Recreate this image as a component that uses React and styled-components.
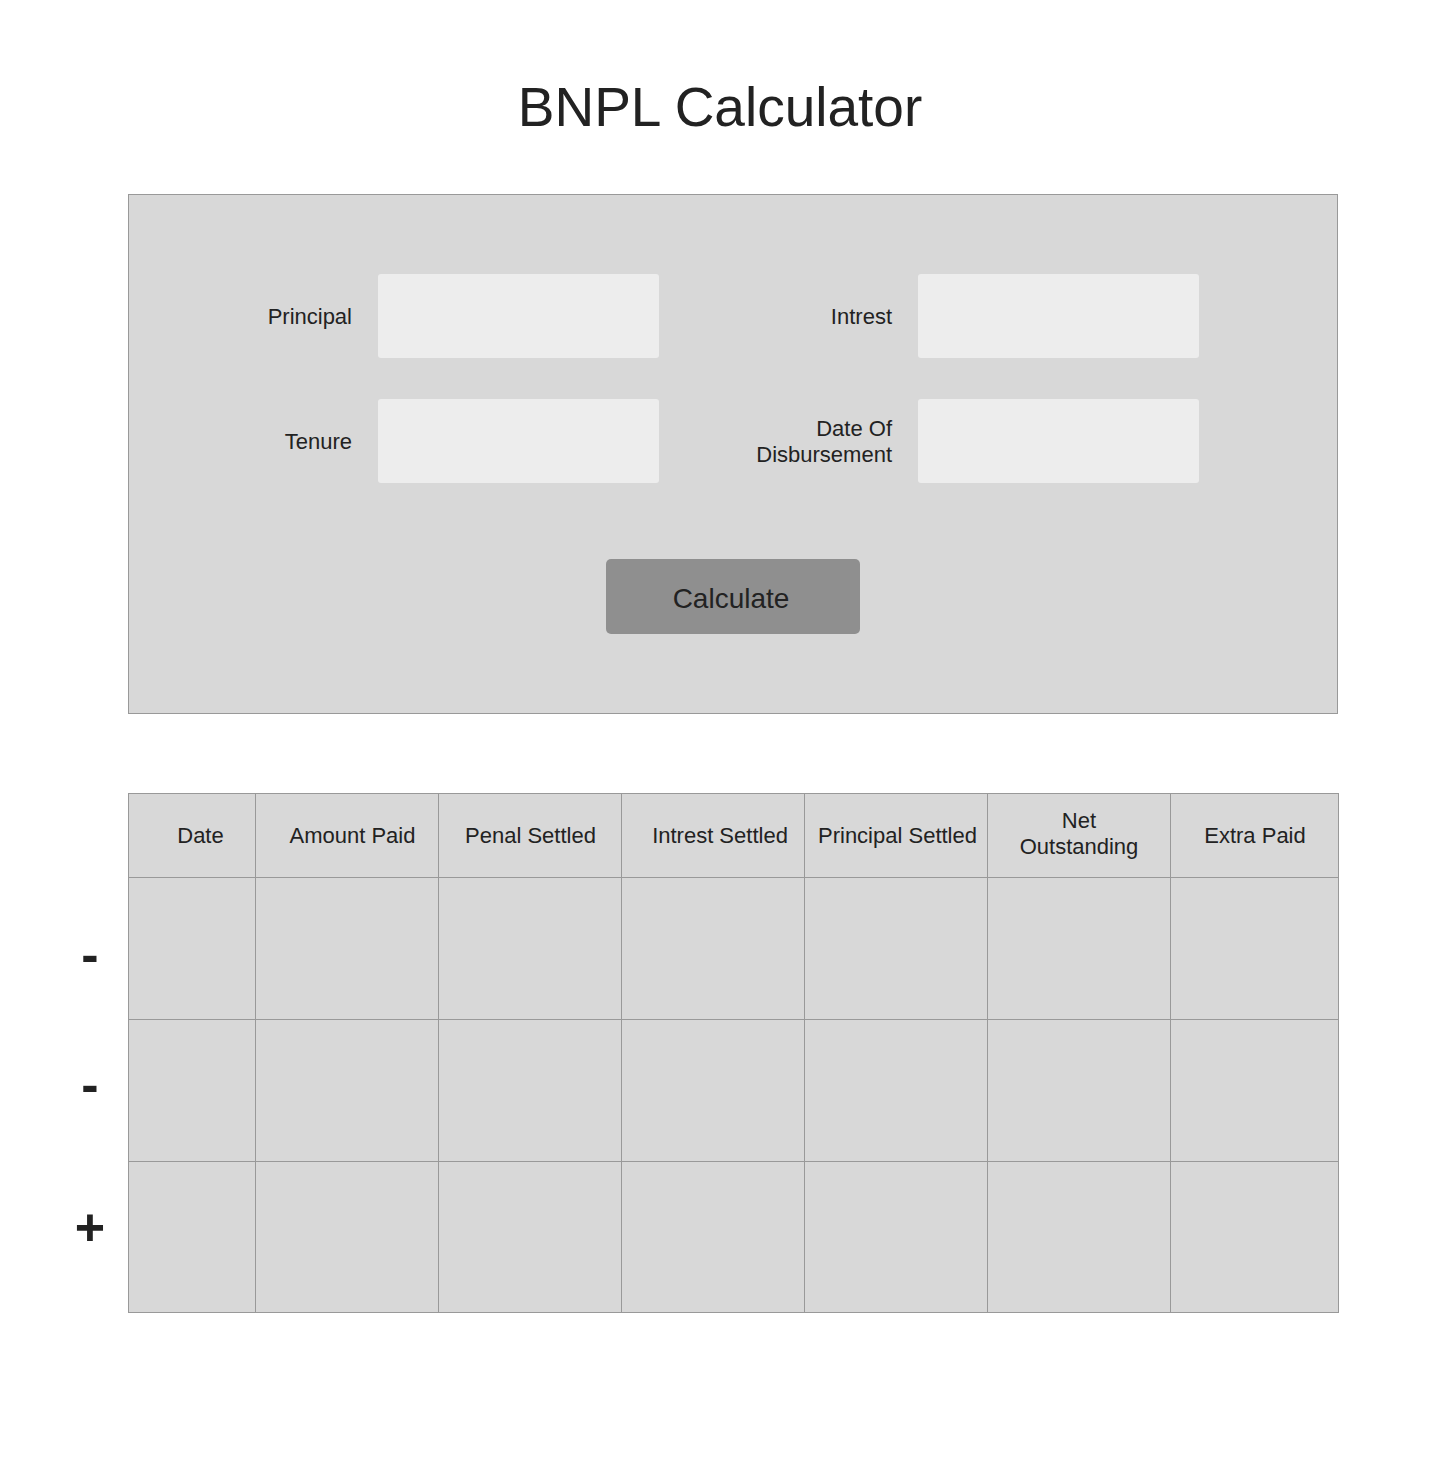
import React from "react";
import styled, { createGlobalStyle } from "styled-components";

const GlobalStyle = createGlobalStyle`
  html, body {
    margin: 0;
    padding: 0;
    background: #ffffff;
    font-family: "Liberation Sans", Arial, Helvetica, sans-serif;
    color: #222222;
  }
  * { box-sizing: border-box; }
`;

const Page = styled.div`
  width: 1440px;
  min-height: 1475px;
  display: flex;
  flex-direction: column;
  padding-top: 76px;
`;

const Title = styled.h1`
  margin: 0;
  font-size: 55px;
  font-weight: 400;
  line-height: 62px;
  text-align: center;
  color: #222;
`;

const FormPanel = styled.section`
  margin: 56px 0 0 128px;
  width: 1210px;
  height: 520px;
  background: #d8d8d8;
  border: 1px solid #999999;
  display: flex;
  flex-direction: column;
  align-items: center;
  padding-top: 79px;
`;

const FieldGrid = styled.div`
  align-self: flex-start;
  display: grid;
  grid-template-columns: 223px 281px 207px 281px;
  column-gap: 26px;
  row-gap: 41px;
  align-items: center;
`;

const Label = styled.label`
  text-align: right;
  font-size: 22px;
  line-height: 26px;
  padding-top: 2px;
  color: #222;
`;

const Input = styled.input`
  width: 281px;
  height: 84px;
  border: none;
  border-radius: 3px;
  background: #ededed;
  outline: none;
  font-family: inherit;
  font-size: 22px;
  padding: 0 16px;
`;

const Button = styled.button`
  margin-top: 76px;
  width: 254px;
  height: 75px;
  border: none;
  border-radius: 5px;
  background: #8f8f8f;
  color: #222;
  font-family: inherit;
  font-size: 28px;
  padding: 4px 4px 0 0;
  cursor: pointer;
`;

const TableSection = styled.section`
  margin: 79px 0 0 52px;
  display: flex;
  align-items: flex-start;
`;

const SignColumn = styled.div`
  width: 76px;
  display: flex;
  flex-direction: column;
  align-items: center;
`;

const Sign = styled.button`
  margin-top: ${(p) => p.$offset}px;
  border: none;
  background: none;
  padding: 0;
  font-family: inherit;
  font-size: 52px;
  font-weight: 700;
  line-height: 52px;
  height: 52px;
  color: #222;
  cursor: pointer;
`;

const Table = styled.div`
  width: 1211px;
  display: grid;
  grid-template-columns: 127px 183px 183px 183px 183px 183px 168px;
  grid-template-rows: 84px 142px 142px 151px;
  border-left: 1px solid #999999;
  border-top: 1px solid #999999;
  background: #d8d8d8;
`;

const Cell = styled.div`
  border-right: 1px solid #999999;
  border-bottom: 1px solid #999999;
  display: flex;
  align-items: center;
  justify-content: center;
  text-align: center;
  font-size: 22px;
  line-height: 26px;
  color: #222;
  padding-left: ${(p) => p.$shift || 0}px;
  padding-bottom: ${(p) => p.$lift || 0}px;
`;

const headers = [
  { text: "Date", shift: 17 },
  { text: "Amount Paid", shift: 11 },
  { text: "Penal Settled", shift: 1 },
  { text: "Intrest Settled", shift: 14 },
  { text: "Principal Settled", shift: 3 },
  { text: ["Net", "Outstanding"], shift: 0, lift: 3 },
  { text: "Extra Paid", shift: 1 },
];

export default function App() {
  const rows = [0, 1, 2];
  return (
    <>
      <GlobalStyle />
      <Page>
        <Title>BNPL Calculator</Title>
        <FormPanel>
          <FieldGrid>
            <Label>Principal</Label>
            <Input />
            <Label>Intrest</Label>
            <Input />
            <Label>Tenure</Label>
            <Input />
            <Label>
              Date Of
              <br />
              Disbursement
            </Label>
            <Input />
          </FieldGrid>
          <Button>Calculate</Button>
        </FormPanel>
        <TableSection>
          <SignColumn>
            <Sign $offset={135}>-</Sign>
            <Sign $offset={78}>-</Sign>
            <Sign $offset={91}>+</Sign>
          </SignColumn>
          <Table>
            {headers.map((h, i) => (
              <Cell key={i} $shift={h.shift} $lift={h.lift}>
                {Array.isArray(h.text) ? (
                  <span>
                    {h.text[0]}
                    <br />
                    {h.text[1]}
                  </span>
                ) : (
                  h.text
                )}
              </Cell>
            ))}
            {rows.map((r) =>
              headers.map((_, c) => <Cell key={`${r}-${c}`} />)
            )}
          </Table>
        </TableSection>
      </Page>
    </>
  );
}
